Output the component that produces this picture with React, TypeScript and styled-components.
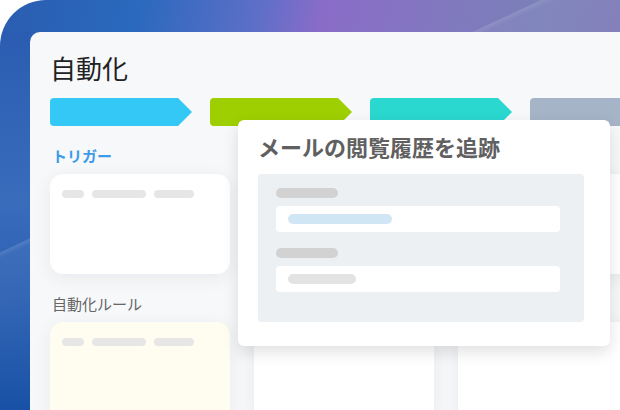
import React from 'react'
import styled, {createGlobalStyle} from 'styled-components'

const GlobalStyle = createGlobalStyle`
  html, body {
    margin: 0;
    padding: 0;
    background: #ffffff;
  }
  body {
    font-family: "Noto Sans CJK JP", "Noto Sans", sans-serif;
    -webkit-font-smoothing: antialiased;
  }
`

const Frame = styled.div`
  position: relative;
  width: 620px;
  height: 410px;
  overflow: hidden;
  box-sizing: border-box;
  padding: 32px 0 0 30px;
  border-top-left-radius: 46px;
  background:
    linear-gradient(
      155deg,
      transparent 36%,
      rgba(255, 255, 255, 0.14) 36.2%,
      rgba(255, 255, 255, 0.05) 37%,
      rgba(255, 255, 255, 0.03) 100%
    ),
    linear-gradient(180deg, #2a5db1 0%, #3a6cbc 45%, #2a5fb2 70%, #0d49a1 100%)
      0 32px / 30px calc(100% - 32px) no-repeat,
    linear-gradient(
      100deg,
      #2a5db1 0%,
      #2a69bd 20%,
      #5f6fc8 38%,
      #8a6cc8 47%,
      #8276c0 62%,
      #7a80b8 78%,
      #8076b8 100%
    );
`

const Panel = styled.div`
  position: relative;
  width: 640px;
  height: 420px;
  box-sizing: border-box;
  padding: 19px 0 0 20px;
  background: #f7f8fa;
  border-top-left-radius: 10px;
  display: flex;
  flex-direction: column;
`

const Title = styled.h1`
  margin: 0;
  font-size: 26px;
  line-height: 34px;
  font-weight: 400;
  color: #222222;
`

const Pipeline = styled.div`
  display: flex;
  gap: 18px;
  margin-top: 13px;
`

const Stage = styled.div<{$color: string}>`
  flex: none;
  width: 142px;
  height: 28px;
  background: ${(p) => p.$color};
  border-radius: 4px;
  clip-path: polygon(0 0, 128px 0, 142px 14px, 128px 28px, 0 28px);
`

const Columns = styled.div`
  display: grid;
  grid-template-columns: repeat(3, 180px);
  column-gap: 24px;
  margin-top: 20px;
`

const Column = styled.div`
  display: flex;
  flex-direction: column;
`

const Label = styled.div<{$accent?: boolean}>`
  height: 20px;
  font-size: 15px;
  line-height: 20px;
  padding-left: 2px;
  font-weight: ${(p) => (p.$accent ? 700 : 400)};
  color: ${(p) => (p.$accent ? '#3d9be9' : '#666666')};
  margin-bottom: 8px;

  &:not(:first-child) {
    margin-top: 20px;
  }
`

const Card = styled.div<{$tint?: string}>`
  height: 100px;
  box-sizing: border-box;
  padding: 16px 12px;
  background: ${(p) => p.$tint ?? '#ffffff'};
  border-radius: 13px;
  box-shadow: 0 4px 18px rgba(30, 40, 60, 0.07);
  display: flex;
  gap: 8px;
  align-items: flex-start;
`

const Pill = styled.span<{$w: number; $color?: string; $h?: number}>`
  flex: none;
  display: block;
  width: ${(p) => p.$w}px;
  height: ${(p) => p.$h ?? 8}px;
  border-radius: 5px;
  background: ${(p) => p.$color ?? '#e6e6e6'};
`

const Popup = styled.div`
  position: absolute;
  left: 208px;
  top: 88px;
  width: 372px;
  box-sizing: border-box;
  padding: 10px 26px 24px 20px;
  background: #ffffff;
  border-radius: 6px;
  box-shadow: 0 6px 16px rgba(0, 0, 0, 0.12);
`

const PopupTitle = styled.h2`
  margin: 0 0 12px;
  font-size: 22px;
  line-height: 32px;
  font-weight: 700;
  color: #606060;
`

const Form = styled.div`
  background: #edf0f3;
  border-radius: 4px;
  padding: 14px 24px 30px 18px;
  display: flex;
  flex-direction: column;
`

const Field = styled.div`
  display: flex;
  flex-direction: column;
  gap: 8px;

  & + & {
    margin-top: 16px;
  }
`

const Input = styled.div`
  height: 26px;
  box-sizing: border-box;
  padding: 0 12px;
  background: #ffffff;
  border-radius: 4px;
  display: flex;
  align-items: center;
`

const skeleton = [22, 54, 40]

const SkeletonCard: React.FC<{tint?: string}> = ({tint}) => (
  <Card $tint={tint}>
    {skeleton.map((w, i) => (
      <Pill key={i} $w={w} />
    ))}
  </Card>
)

const stages = ['#33c8f5', '#9ecf00', '#2ad8d0', '#a6b4c8']

// Only the first column's labels are visible; the others sit under the popup.
const columns = [
  {id: 'trigger', top: 'トリガー', bottom: '自動化ルール', tint: '#fffdf0'},
  {id: 'condition', top: '', bottom: '', tint: undefined},
  {id: 'action', top: '', bottom: '', tint: undefined},
]

export default function App() {
  return (
    <>
      <GlobalStyle />
      <Frame>
        <Panel>
          <Title>自動化</Title>
          <Pipeline>
            {stages.map((c) => (
              <Stage key={c} $color={c} />
            ))}
          </Pipeline>
          <Columns>
            {columns.map((col) => (
              <Column key={col.id}>
                <Label $accent>{col.top}</Label>
                <SkeletonCard />
                <Label>{col.bottom}</Label>
                <SkeletonCard tint={col.tint} />
              </Column>
            ))}
          </Columns>

          <Popup>
            <PopupTitle>メールの閲覧履歴を追跡</PopupTitle>
            <Form>
              <Field>
                <Pill $w={62} $h={10} $color="#d2d2d2" />
                <Input>
                  <Pill $w={104} $h={10} $color="#d0e6f5" />
                </Input>
              </Field>
              <Field>
                <Pill $w={62} $h={10} $color="#d2d2d2" />
                <Input>
                  <Pill $w={68} $h={10} $color="#e3e3e3" />
                </Input>
              </Field>
            </Form>
          </Popup>
        </Panel>
      </Frame>
    </>
  )
}
